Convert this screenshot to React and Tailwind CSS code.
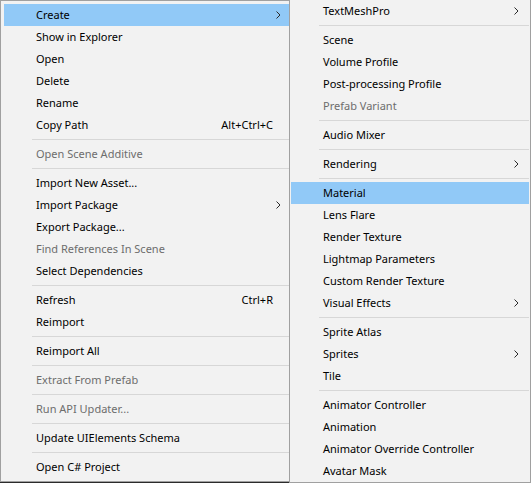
import React from 'react';

const leftItems = [
  { label: 'Create', sub: true, active: true },
  { label: 'Show in Explorer' },
  { label: 'Open' },
  { label: 'Delete' },
  { label: 'Rename' },
  { label: 'Copy Path', shortcut: 'Alt+Ctrl+C' },
  { sep: true },
  { label: 'Open Scene Additive', disabled: true },
  { sep: true },
  { label: 'Import New Asset...' },
  { label: 'Import Package', sub: true },
  { label: 'Export Package...' },
  { label: 'Find References In Scene', disabled: true },
  { label: 'Select Dependencies' },
  { sep: true },
  { label: 'Refresh', shortcut: 'Ctrl+R' },
  { label: 'Reimport' },
  { sep: true },
  { label: 'Reimport All' },
  { sep: true },
  { label: 'Extract From Prefab', disabled: true },
  { sep: true },
  { label: 'Run API Updater...', disabled: true },
  { sep: true },
  { label: 'Update UIElements Schema' },
  { sep: true },
  { label: 'Open C# Project' },
];

const rightItems = [
  { label: 'TextMeshPro', sub: true },
  { sep: true },
  { label: 'Scene' },
  { label: 'Volume Profile' },
  { label: 'Post-processing Profile' },
  { label: 'Prefab Variant', disabled: true },
  { sep: true },
  { label: 'Audio Mixer' },
  { sep: true },
  { label: 'Rendering', sub: true },
  { sep: true },
  { label: 'Material', active: true },
  { label: 'Lens Flare' },
  { label: 'Render Texture' },
  { label: 'Lightmap Parameters' },
  { label: 'Custom Render Texture' },
  { label: 'Visual Effects', sub: true },
  { sep: true },
  { label: 'Sprite Atlas' },
  { label: 'Sprites', sub: true },
  { label: 'Tile' },
  { sep: true },
  { label: 'Animator Controller' },
  { label: 'Animation' },
  { label: 'Animator Override Controller' },
  { label: 'Avatar Mask' },
];

function Chevron() {
  return (
    <svg width="5" height="8" viewBox="0 0 5 8" className="shrink-0">
      <polyline points="0.5,0.5 4,4 0.5,7.5" fill="none" stroke="#2a2a2a" strokeWidth="1" />
    </svg>
  );
}

function Menu({ items, arrowPad }) {
  return items.map((it, i) =>
    it.sep ? (
      <div key={i} className="h-[7px] pt-[3px] pl-[28px]">
        <div className="h-px bg-[#d7d7d7]" />
      </div>
    ) : (
      <div
        key={i}
        className={`h-[22px] flex items-center pl-[32px] ${it.active ? 'bg-[#91c9f7]' : ''} ${it.disabled ? 'text-[#6d6d6d]' : 'text-black'}`}
      >
        <span className="flex-1 whitespace-nowrap">{it.label}</span>
        {it.shortcut && <span className="pr-[16px] whitespace-nowrap">{it.shortcut}</span>}
        {it.sub && <span className={arrowPad}><Chevron /></span>}
      </div>
    )
  );
}

export default function App() {
  return (
    <div
      className="w-[531px] h-[483px] bg-[#2b2b2b] flex items-start overflow-hidden text-[11px] leading-[22px]"
      style={{ fontFamily: '"Noto Sans", "Open Sans", sans-serif' }}
    >
      <div className="w-[289px] h-[482px] shrink-0 bg-[#f2f2f2] border-l border-t border-b border-[#a0a0a0] pl-[3px] py-[3px]">
        <Menu items={leftItems} arrowPad="pr-[8px]" />
      </div>
      <div className="w-[242px] h-[483px] shrink-0 bg-[#f2f2f2] border-l border-r border-b border-[#a0a0a0] px-px">
        <Menu items={rightItems} arrowPad="pr-[10px]" />
      </div>
    </div>
  );
}
